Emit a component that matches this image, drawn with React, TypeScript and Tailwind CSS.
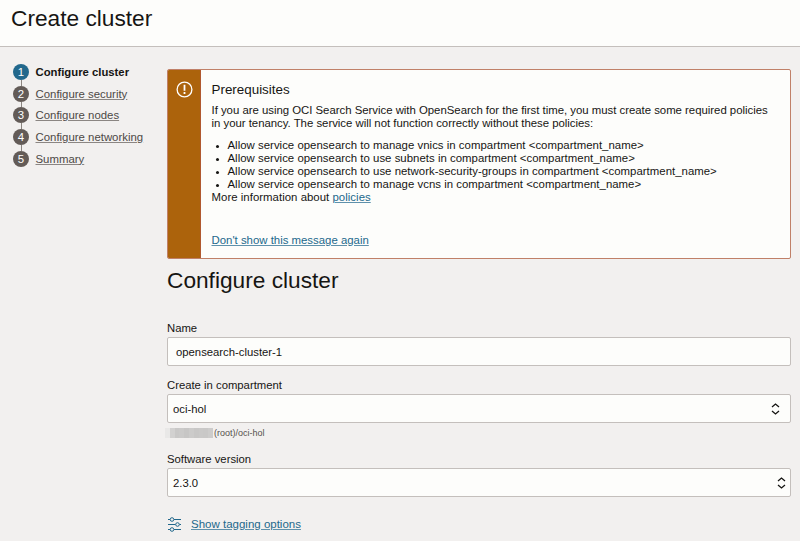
import React from "react";

const steps = [
  "Configure cluster",
  "Configure security",
  "Configure nodes",
  "Configure networking",
  "Summary",
];

const policies = [
  "Allow service opensearch to manage vnics in compartment <compartment_name>",
  "Allow service opensearch to use subnets in compartment <compartment_name>",
  "Allow service opensearch to use network-security-groups in compartment <compartment_name>",
  "Allow service opensearch to manage vcns in compartment <compartment_name>",
];

// Shades of the obscured tenancy name, one per block.
const mosaic = [
  "bg-[#e9e8e7]",
  "bg-[#d2d1d0]",
  "bg-[#c9c8c7]",
  "bg-[#cbcac9]",
  "bg-[#c7c6c5]",
  "bg-[#cccbca]",
  "bg-[#c8c7c6]",
  "bg-[#cac9c8]",
  "bg-[#c9c8c7]",
  "bg-[#cdcccb]",
];

function StepList() {
  return (
    <nav className="w-[167px] shrink-0 pl-[13px] pt-[17px]">
      <ol>
        {steps.map((label, i) => (
          <li key={label} className="flex h-[21.7px] items-start">
            <div className="flex h-full w-4 shrink-0 flex-col items-center">
              <span
                className={`flex size-4 shrink-0 items-center justify-center rounded-full text-[11.4px] leading-4 text-white ${
                  i === 0 ? "bg-[#22688c]" : "bg-[#635b57]"
                }`}
              >
                {i + 1}
              </span>
              {i < steps.length - 1 && <span className="w-px flex-1 bg-[#8b8580]" />}
            </div>
            <a
              className={`ml-[6.5px] whitespace-nowrap leading-4 ${
                i === 0
                  ? "text-[11.3px] font-bold text-[#161513]"
                  : "text-[11.4px] text-[#4d4946] underline decoration-[#8b8683] underline-offset-[1px]"
              }`}
            >
              {label}
            </a>
          </li>
        ))}
      </ol>
    </nav>
  );
}

function Notice() {
  return (
    <section className="flex h-[190px] overflow-hidden rounded-[2px] border border-[#c08068] bg-[#fdfdfb]">
      <div className="flex w-[33px] shrink-0 justify-center border-r border-[#b0582f] bg-[#ac630c] pt-[11px]">
        <svg width="17" height="17" viewBox="0 0 17 17" fill="none" stroke="#fff">
          <circle cx="8.5" cy="8.5" r="7.4" strokeWidth="1.3" />
          <path d="M8.5 3.8v6M8.5 11.1v1.9" strokeWidth="1.8" />
        </svg>
      </div>
      <div className="pl-[10.5px] pt-[12px] text-[11.4px] leading-[13px]">
        <h2 className="text-[13.4px] leading-4">Prerequisites</h2>
        <p className="mt-[6px] whitespace-nowrap tracking-[-0.02px]">
          If you are using OCI Search Service with OpenSearch for the first time, you must create some required policies
          <br />
          in your tenancy. The service will not function correctly without these policies:
        </p>
        <ul className="mt-[9px] tracking-[0.02px]">
          {policies.map((text) => (
            <li key={text} className="flex items-center whitespace-nowrap">
              <span className="ml-1 mr-[9px] mt-px size-[3px] rounded-full bg-[#161513]" />
              {text}
            </li>
          ))}
        </ul>
        <p className="tracking-[0.03px]">
          More information about{" "}
          <a className="text-[#22688c] underline decoration-[#5f91ab] underline-offset-[1px]">policies</a>
        </p>
        <a className="mt-[30px] block text-[#22688c] underline decoration-[#5f91ab] underline-offset-[1px]">
          Don't show this message again
        </a>
      </div>
    </section>
  );
}

function Chevrons({ className }: { className: string }) {
  return (
    <svg className={className} width="9" height="12" viewBox="0 0 9 12" fill="none" stroke="#161513" strokeWidth="1.3">
      <path d="M1 4L4.5 1L8 4M1 8L4.5 11L8 8" />
    </svg>
  );
}

export default function App() {
  return (
    <div className="flex h-[541px] w-[800px] flex-col overflow-hidden bg-[#f2f0ef] font-['Liberation_Sans',Arial,sans-serif] text-[#161513]">
      <header className="h-[47px] shrink-0 border-b border-[#c4bfbc] bg-[#fdfdfb] pl-[11px] pt-[4px]">
        <h1 className="text-[22.7px] leading-7">Create cluster</h1>
      </header>
      <div className="flex flex-1">
        <StepList />
        <main className="w-[624px] pt-[22px] text-[11.3px] leading-[14px]">
          <Notice />
          <h2 className="mt-[7px] text-[22.7px] leading-7">Configure cluster</h2>
          <p className="mt-[27px]">Name</p>
          <div className="mt-[2px] flex h-[29px] items-center rounded-[2px] border border-[#c4bfbc] bg-[#fdfdfb] pl-[8px]">
            opensearch-cluster-1
          </div>
          <p className="mt-[12px]">Create in compartment</p>
          <div className="mt-[2px] flex h-[29px] items-center justify-between rounded-[2px] border border-[#c4bfbc] bg-[#fdfdfb] pl-[5px]">
            oci-hol
            <Chevrons className="mr-[10px]" />
          </div>
          <div className="mt-[4px] flex h-[12px] items-center text-[9px] leading-3 text-[#55504d]">
            <span className="-ml-[2px] mr-px flex h-[10px] w-[48px]">
              {mosaic.map((shade, i) => (
                <span key={i} className={`flex-1 ${shade}`} />
              ))}
            </span>
            <span className="-mt-px">(root)/oci-hol</span>
          </div>
          <p className="mt-[13px]">Software version</p>
          <div className="mt-[2px] flex h-[29px] items-center justify-between rounded-[2px] border border-[#c4bfbc] bg-[#fdfdfb] pl-[5px]">
            2.3.0
            <Chevrons className="mr-[4px]" />
          </div>
          <div className="mt-[19px] flex items-center">
            <svg className="mt-px" width="15" height="15" viewBox="0 0 15 15" fill="none" stroke="#22688c" strokeWidth="1">
              <path d="M1 2.5H3M7 2.5H14M1 7.5H8.5M12.5 7.5H14M1 12.5H3M7 12.5H14" />
              <circle cx="5" cy="2.5" r="1.8" />
              <circle cx="10.5" cy="7.5" r="1.8" />
              <circle cx="5" cy="12.5" r="1.8" />
            </svg>
            <a className="ml-[9px] text-[11.5px] text-[#22688c] underline decoration-[#5f91ab] underline-offset-[1px]">
              Show tagging options
            </a>
          </div>
        </main>
      </div>
    </div>
  );
}
